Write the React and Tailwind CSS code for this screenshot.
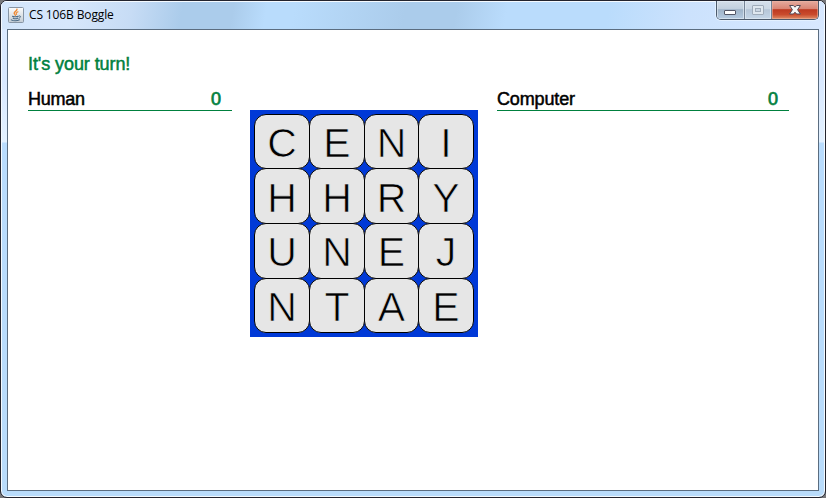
const rows = [
  { letters: "CENI", pad: "pt-[3px]" },
  { letters: "HHRY", pad: "pt-[4px]" },
  { letters: "UNEJ", pad: "pt-[2px]" },
  { letters: "NTAE", pad: "pt-[3px]" },
];

function JavaIcon() {
  return (
    <svg className="mt-[6px] ml-[7px] block h-4 w-4 shrink-0" viewBox="0 0 16 16">
      <defs>
        <linearGradient id="javaBg" x1="0" y1="0" x2="0" y2="1">
          <stop offset="0" stopColor="#fdfdfd" />
          <stop offset="1" stopColor="#c3ccd4" />
        </linearGradient>
      </defs>
      <rect x=".5" y=".5" width="15" height="15" rx="1" fill="url(#javaBg)" stroke="#8795a5" />
      <g fill="none" strokeLinecap="round">
        <path d="M9 2.2C9.3 4 6 4.6 6.2 6.3C6.3 7 7.4 7.5 7.3 8.4" stroke="#ee8a35" strokeWidth="1.4" />
        <path d="M10 4.7C8.2 5.5 7.8 6.3 8.6 7.3" stroke="#ee8a35" strokeWidth="1.1" />
        <path d="M4.5 9.3C5.5 10 9 9.8 10.3 9.2M5.2 11.2C6.5 11.9 8.5 11.8 9.6 11.2M3.3 12.8C5 14.2 9.5 14.1 11.4 12.8" stroke="#4d6c88" strokeWidth="1.1" />
        <path d="M11.2 8.9C13.3 8.5 13 10.6 11 11.2" stroke="#4d6c88" strokeWidth="1" />
      </g>
    </svg>
  );
}

function WindowButtons() {
  return (
    <div className="mr-[6px] ml-auto flex h-[19px] w-[103px] overflow-hidden rounded-b-[5px] border border-t-0 border-[#4c5a6c] shadow-[0_0_0_1px_#e3f0ff]">
      <div className="flex w-[28px] items-start justify-center border-r border-[#758395] bg-[linear-gradient(#d3dde8_0%,#c1cfde_44%,#9fb3c8_48%,#b6cbe1_100%)] shadow-[inset_0_0_0_1px_#e2ebf5aa]">
        <svg className="mt-[8px] h-[7px] w-[13px]" viewBox="0 0 13 7">
          <rect x=".5" y="1.5" width="11" height="4" rx=".5" fill="#fff" stroke="#535666" />
        </svg>
      </div>
      <div className="flex w-[27px] items-start justify-center border-r border-[#758395] bg-[linear-gradient(#d5dfeb_0%,#cbd7e4_44%,#b6c6d8_48%,#c5d6e8_100%)] shadow-[inset_0_0_0_1px_#e2ebf5aa]">
        <svg className="mt-[4px] h-[11px] w-[12px]" viewBox="0 0 12 11">
          <rect x=".5" y=".5" width="11" height="9" rx=".5" fill="#dfe7ef" stroke="#a0acba" />
          <rect x="3.5" y="3.5" width="5" height="3" fill="#cbd6e3" stroke="#a0acba" />
        </svg>
      </div>
      <div className="flex flex-1 items-start justify-center bg-[linear-gradient(#e5ab9f_0%,#d98473_44%,#bd3921_48%,#c94b2d_75%,#de8e68_100%)] shadow-[inset_0_0_0_1px_#efb6a488]">
        <svg className="mt-[3px] h-[12px] w-[14px]" viewBox="0 0 14 12">
          <path
            d="M1.6 1.5H5.4L7 3.2L8.6 1.5H12.4L9.6 5.7L12.4 10H8.6L7 8.2L5.4 10H1.6L4.4 5.7Z"
            fill="#f7f7f7"
            stroke="#534955"
            strokeWidth="1"
            strokeLinejoin="round"
          />
        </svg>
      </div>
    </div>
  );
}

function Score({ name, nameClass, className }) {
  return (
    <div
      className={
        "flex h-[23px] justify-between border-b border-[#00803e] pr-[11px] text-[18px] leading-[23px] " +
        className
      }
    >
      <span className={"text-black [-webkit-text-stroke:0.5px] " + nameClass}>{name}</span>
      <span className="text-[#00803e] [-webkit-text-stroke:0.7px]">0</span>
    </div>
  );
}

function Board() {
  return (
    <div className="mt-[22px] ml-[18px] h-[227px] w-[228px] shrink-0 bg-[#0039d7] p-1">
      <div className="grid grid-cols-[55px_55px_54px_55px] grid-rows-[54px_55px_55px_54px]">
        {rows.map((row, r) =>
          row.letters.split("").map((letter, c) => (
            <div
              key={r + "-" + c}
              className={
                "-mr-px -mb-px flex items-center justify-center rounded-[12px] border border-black bg-[#e6e6e6] text-[41px] leading-[40px] text-black [-webkit-text-stroke:0.7px_#e6e6e6] " +
                row.pad
              }
            >
              {letter}
            </div>
          ))
        )}
      </div>
    </div>
  );
}

export default function App() {
  return (
    <div className="h-[498px] w-[826px] bg-[#77777a] font-['Liberation_Sans',Arial,sans-serif]">
      <div className="flex h-full w-full flex-col overflow-hidden rounded-[7px] border border-[#23242e] bg-[linear-gradient(#dceaff_0px,#d9e9ff_80px,#e3f1ff_141px,#b9dcfd_142px,#b9dcfb_100%)] shadow-[inset_0_0_0_1px_#f4faff]">
        <div className="flex h-[28px] shrink-0 bg-[linear-gradient(100deg,#d3e5fb_0px,#d7e7fb_70px,#c7dcf5_130px,#abcceb_180px,#abcceb_230px,#b9dcfc_263px,#b9dcfc_290px,#abcceb_400px,#abcceb_450px,#badcfc_500px,#badcfc_600px,#cce2fd_680px,#d8e8ff_100%)] shadow-[inset_0_1px_0_#f5faff,inset_1px_0_0_#f5faff,inset_-1px_0_0_#f5faff]">
          <JavaIcon />
          <span className="mt-[5px] ml-[5px] text-[12px] leading-[18px] tracking-[-0.13px] whitespace-pre text-black font-['Open_Sans','Noto_Sans',sans-serif]">
            CS 106B Boggle
          </span>
          <WindowButtons />
        </div>
        <div className="mx-[6px] mb-[6px] flex-1 border border-[#5b6d80] bg-white">
          <div className="mt-[22px] ml-[20px] h-[24px] text-[18px] leading-[24px] tracking-[-0.08px] text-[#00803e] [-webkit-text-stroke:0.5px]">
            It's your turn!
          </div>
          <div className="mt-[12px] ml-[20px] flex items-start">
            <Score name="Human" nameClass="tracking-[-0.25px]" className="w-[204px]" />
            <Board />
            <Score name="Computer" nameClass="tracking-[-0.15px]" className="ml-[19px] w-[292px]" />
          </div>
        </div>
      </div>
    </div>
  );
}
